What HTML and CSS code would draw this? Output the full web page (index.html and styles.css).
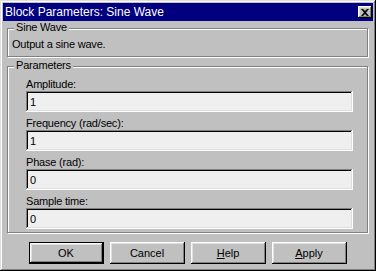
FILE: index.html
```html
<!DOCTYPE html>
<html>
<head>
<meta charset="utf-8">
<link rel="stylesheet" href="styles.css">
</head>
<body>
<div class="window">
  <div class="titlebar">
    <span class="title">Block Parameters: Sine Wave</span>
    <span class="close"><svg width="8" height="7" viewBox="0 0 8 7"><path d="M0 0H2L4 2L6 0H8L5 3.5L8 7H6L4 5L2 7H0L3 3.5Z" fill="#000"/></svg></span>
  </div>
  <div class="content">
    <div class="group group-desc">
      <span class="legend">Sine Wave</span>
      <p class="desc">Output a sine wave.</p>
    </div>
    <div class="group group-params">
      <span class="legend">Parameters</span>
      <div class="field"><label class="label">Amplitude:</label><input class="input" type="text" value="1"></div>
      <div class="field"><label class="label">Frequency (rad/sec):</label><input class="input" type="text" value="1"></div>
      <div class="field"><label class="label">Phase (rad):</label><input class="input" type="text" value="0"></div>
      <div class="field"><label class="label">Sample time:</label><input class="input" type="text" value="0"></div>
    </div>
    <div class="buttons">
      <button class="btn btn-default">OK</button>
      <button class="btn">Cancel</button>
      <button class="btn"><u>H</u>elp</button>
      <button class="btn"><u>A</u>pply</button>
    </div>
  </div>
</div>
</body>
</html>
```

FILE: styles.css
```css
html, body {
  margin: 0;
  padding: 0;
  background: #c0c0c0;
}
body {
  font-family: "Liberation Sans", Arial, sans-serif;
  font-size: 11px;
  letter-spacing: -0.2px;
  color: #000;
}
.window {
  box-sizing: border-box;
  width: 376px;
  height: 271px;
  padding: 3px;
  background: #c0c0c0;
  box-shadow: inset -1px -1px #000, inset 1px 1px #dfdfdf, inset -2px -2px #808080, inset 2px 2px #fff;
}
.titlebar {
  height: 18px;
  background: #000080;
  color: #fff;
  display: flex;
  align-items: center;
  justify-content: space-between;
  padding-left: 2px;
  padding-right: 1px;
}
.title {
  font-size: 12px;
  line-height: 14px;
  letter-spacing: 0;
}
.close {
  box-sizing: border-box;
  width: 14px;
  height: 12px;
  background: #c0c0c0;
  display: flex;
  align-items: center;
  justify-content: center;
  box-shadow: inset -1px -1px #000, inset 1px 1px #fff, inset -2px -2px #808080, inset 2px 2px #dfdfdf;
}
.close svg { display: block; }
.content {
  padding: 7px 5px 0 4px;
}
.group {
  position: relative;
  border: 1px solid #808080;
  box-shadow: 1px 1px 0 #fff, inset 1px 1px 0 #fff;
}
.legend {
  position: absolute;
  top: -8px;
  left: 6px;
  padding: 0 2px;
  line-height: 13px;
  background: #c0c0c0;
}
.group-desc {
  padding: 9px 4px 5px 4px;
}
.desc {
  margin: 0;
  line-height: 13px;
}
.group-params {
  margin-top: 9px;
  padding: 11px 14px 3px 18px;
  display: flex;
  flex-direction: column;
  gap: 5px;
}
.field {
  display: flex;
  flex-direction: column;
}
.label {
  line-height: 13px;
}
.input {
  box-sizing: border-box;
  width: 100%;
  height: 21px;
  margin: 0;
  border: none;
  padding: 0 4px;
  background: #efefef;
  font-family: inherit;
  font-size: 11px;
  color: #000;
  outline: none;
  box-shadow: inset -1px -1px #fff, inset 1px 1px #808080, inset -2px -2px #dfdfdf, inset 2px 2px #000;
}
.buttons {
  margin-top: 9px;
  display: flex;
  justify-content: center;
  gap: 6px;
}
.btn {
  box-sizing: border-box;
  width: 75px;
  height: 22px;
  margin: 0;
  padding: 0;
  border: none;
  background: #c0c0c0;
  font-family: inherit;
  font-size: 11px;
  letter-spacing: 0;
  color: #000;
  box-shadow: inset -1px -1px #000, inset 1px 1px #fff, inset -2px -2px #808080, inset 2px 2px #dfdfdf;
}
.btn u { text-decoration: underline; }
.btn-default {
  box-shadow: inset -2px -2px #000, inset 1px 1px #000, inset 2px 2px #fff, inset -3px -3px #808080, inset 3px 3px #dfdfdf;
}
```
